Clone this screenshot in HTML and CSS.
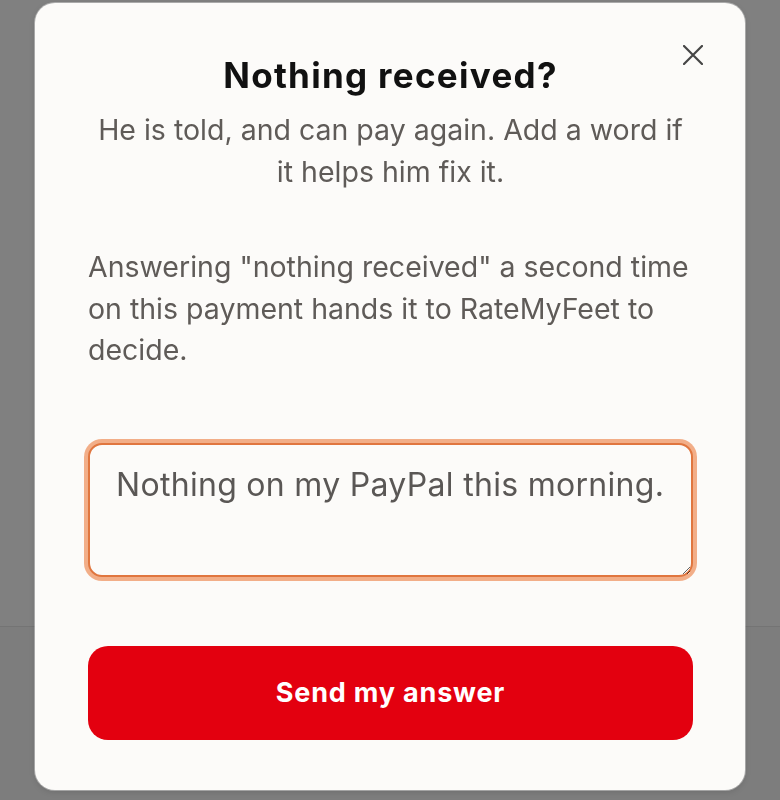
FILE: index.html
```html
<!DOCTYPE html>
<html lang="en">
<head>
<meta charset="utf-8">
<title>Nothing received?</title>
<link rel="stylesheet" href="styles.css">
</head>
<body>
<div class="page">
  <div class="page-top"></div>
  <div class="page-bottom"></div>
</div>
<div class="overlay">
  <div class="modal" role="dialog" aria-labelledby="modal-title">
    <button class="close" aria-label="Close">
      <svg viewBox="0 0 20 20" width="20" height="20"><path d="M1 1 L19 19 M19 1 L1 19" stroke="#454545" stroke-width="2.2" stroke-linecap="round" fill="none"/></svg>
    </button>
    <h2 class="title" id="modal-title">Nothing received?</h2>
    <p class="subtitle">He is told, and can pay again. Add a word if it helps him fix it.</p>
    <p class="note">Answering "nothing received" a second time on this payment hands it to RateMyFeet to decide.</p>
    <textarea class="answer">Nothing on my PayPal this morning.</textarea>
    <button class="send">Send my answer</button>
  </div>
</div>
</body>
</html>
```

FILE: styles.css
```css
html, body {
  margin: 0;
  padding: 0;
}
body {
  background: #7f7f7f;
  width: 780px;
  height: 800px;
  overflow: hidden;
  font-family: "Inter", "DejaVu Sans", sans-serif;
}
.page {
  display: flex;
  flex-direction: column;
  height: 800px;
}
.page-top {
  height: 626px;
  background: #808080;
  border-bottom: 1px solid #747474;
}
.page-bottom {
  flex: 1;
  background: #7d7d7d;
}
.overlay {
  position: fixed;
  inset: 0;
  display: flex;
  justify-content: center;
  align-items: flex-start;
  padding-top: 3px;
}
.modal {
  position: relative;
  width: 710px;
  box-sizing: border-box;
  height: 787px;
  padding: 52px 52px 50px 53px;
  background: #fcfbf9;
  border-radius: 20px;
  box-shadow: 0 0 0 1px rgba(255,255,255,0.35), 0 2px 6px rgba(0,0,0,0.12);
  display: flex;
  flex-direction: column;
}
.close {
  position: absolute;
  top: 42px;
  right: 42px;
  width: 20px;
  height: 20px;
  padding: 0;
  border: 0;
  background: transparent;
  display: flex;
}
.title {
  margin: 0;
  font-size: 35px;
  line-height: 41px;
  font-weight: 700;
  color: #111111;
  text-align: center;
  letter-spacing: 1.3px;
}
.subtitle {
  margin: 13px 0 0;
  font-size: 28.5px;
  line-height: 41.5px;
  color: #5f5b58;
  text-align: center;
  padding: 0 4px;
}
.note {
  margin: 54px 0 0;
  font-size: 28.5px;
  line-height: 41.5px;
  color: #5f5b58;
}
.answer {
  margin: 72px 0 0;
  box-sizing: border-box;
  width: 605px;
  height: 134px;
  padding: 19px 24px 19px 26px;
  font-family: "Inter", "DejaVu Sans", sans-serif;
  font-size: 32px;
  line-height: 41px;
  letter-spacing: 0.3px;
  color: #5a5755;
  background: #fcfbf9;
  border: 2px solid #e0763f;
  border-radius: 14px;
  box-shadow: 0 0 0 4px #f2ae88;
  resize: vertical;
  outline: none;
}
.send {
  margin-top: 69px;
  width: 605px;
  height: 94px;
  border: 0;
  border-radius: 20px;
  background: #e3000f;
  color: #ffffff;
  font-family: "Inter", "DejaVu Sans", sans-serif;
  font-size: 27px;
  font-weight: 700;
  letter-spacing: 0.8px;
}
```
